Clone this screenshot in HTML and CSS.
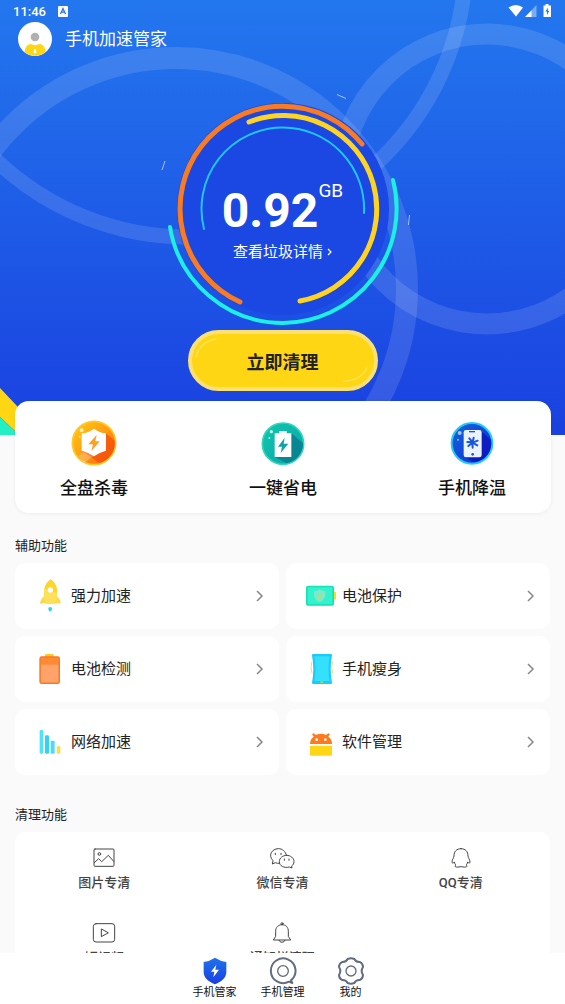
FILE: index.html
```html
<!DOCTYPE html>
<html lang="zh-CN">
<head>
    <meta charset="UTF-8">
    <meta name="viewport" content="width=device-width, initial-scale=1.0">
    <title>手机加速管家</title>
    <link rel="stylesheet" href="styles.css">
</head>
<body>
    <main class="content">
        <div class="hero">
            <svg class="hero-bg" viewBox="0 0 565 435" preserveAspectRatio="xMidYMin slice" aria-hidden="true">
                <g fill="none" stroke="#fff" stroke-opacity="0.12">
                    <circle cx="176" cy="289" r="231" stroke-width="22"/>
                    <circle cx="487" cy="179" r="145" stroke-width="21"/>
                    <circle cx="188" cy="-41" r="278" stroke-width="15"/>
                </g>
                <g stroke="#fff" stroke-opacity="0.6" stroke-width="1">
                    <path d="M165 161l-3 9M337 94.500l9 4M409.500 215l-1 10"/>
                </g>
                <path d="M0 388l18 19v27L0 417z" fill="#ffd614"/>
                <path d="M0 417l18 17v1H0z" fill="#22efc4"/>
            </svg>

            <div class="status-bar">
                <span class="time">11:46</span>
                <svg width="10" height="11" viewBox="0 0 10 11">
                    <rect width="10" height="11" rx="1" fill="#fff"/>
                    <path d="M2.500 8L5 2.500 7.500 8M3.500 6.200h3" fill="none" stroke="#2874ea" stroke-width="1.300"/>
                </svg>
                <svg class="signals" width="44" height="14" viewBox="0 0 44 14">
                    <path d="M0.500 3.500Q8 -1.500 15 3.500L8 12.500z" fill="#fff"/>
                    <path d="M28.500 1v12H17z" fill="#fff" fill-opacity="0.4"/>
                    <path d="M23.500 6.500V13H17z" fill="#fff"/>
                    <path d="M37.500 0h3v1.500H43V13h-7.500V1.500h2z" fill="#fff"/>
                    <path d="M39.800 3.500l-2.300 4h1.500V11l2.300-4.300h-1.500z" fill="#2874ea"/>
                </svg>
            </div>

            <header class="header">
                <svg width="34" height="34" viewBox="0 0 102 102" aria-hidden="true">
                    <clipPath id="avatar-clip"><circle cx="51" cy="51" r="50"/></clipPath>
                    <circle cx="51" cy="51" r="51" fill="#fff"/>
                    <circle cx="51" cy="45" r="13" fill="#b0b0b0"/>
                    <path d="M18 102c0-22 9-36 20-36q13 7 26 0c12 0 21 14 21 36z" fill="#ffd614" clip-path="url(#avatar-clip)"/>
                    <path d="M48 81h6l1 10-4 4-4-4z" fill="#fff"/>
                </svg>
                <h1>手机加速管家</h1>
            </header>

            <div class="gauge">
                <svg class="gauge-rings" viewBox="-118 -118 236 236" aria-hidden="true">
                    <circle r="106" fill="#1b47e2"/>
                    <g fill="none" stroke-linecap="round">
                        <path d="M79 -65A102.500 102.500 0 1 0 -43 93" stroke="#f97b22" stroke-width="5"/>
                        <path d="M-34 -87A93.500 93.500 0 1 1 17 92" stroke="#ffd420" stroke-width="5"/>
                        <path d="M-79 20A81.500 81.500 0 0 1 0 -81.500A81.500 81.500 0 0 1 81 4" stroke="#20c6f2" stroke-width="2"/>
                        <path d="M110 -29A114.500 114.500 0 0 1 0 114A114.500 114.500 0 0 1 -113 18" stroke="#1cf0e2" stroke-width="4"/>
                    </g>
                </svg>
                <div class="gauge-text">
                    <p class="amount">0.92<span class="unit">GB</span></p>
                    <a class="detail" href="#">查看垃圾详情
                        <svg width="5" height="8" viewBox="0 0 5 8"><path d="M1 1l3 3-3 3" fill="none" stroke="#fff" stroke-width="1.200"/></svg>
                    </a>
                </div>
            </div>

            <button class="clean-btn" type="button">
                <svg class="btn-shine" viewBox="4 4 182 53" aria-hidden="true">
                    <path d="M8 27Q12 12 28 9M179 38Q172 51 156 51" fill="none" stroke="#ffe252" stroke-width="1.500" stroke-linecap="round"/>
                </svg>
                <span>立即清理</span>
            </button>
        </div>

        <section class="features">
            <button type="button">
                <svg width="46" height="46" viewBox="0 0 138 138" aria-hidden="true">
                    <defs>
                        <linearGradient id="orange" x1="0" y1="0" x2="1" y2="1">
                            <stop offset="0" stop-color="#ffcf12"/>
                            <stop offset="0.500" stop-color="#ff9d12"/>
                            <stop offset="1" stop-color="#fa5a0c"/>
                        </linearGradient>
                    </defs>
                    <circle cx="69" cy="69" r="65" fill="url(#orange)" stroke="#ffc928" stroke-width="5"/>
                    <path d="M105 40l26 22A62 62 0 0 1 85 129L32 92z" fill="#f64f0a" fill-opacity="0.750"/>
                    <path d="M22 108L52 86l16 22-28 20z" fill="#fff" fill-opacity="0.250"/>
                    <path d="M69 26q16 12 36 14v52q-20 5-36 17-16-12-37-17V40q21-2 37-14z" fill="#fff"/>
                    <path d="M77 45L52 73h14l-5 21 25-30H73z" fill="#ffa021"/>
                    <circle cx="32" cy="31" r="6" fill="#fff" fill-opacity="0.700"/>
                    <circle cx="26" cy="50" r="3" fill="#fff" fill-opacity="0.600"/>
                </svg>
                <span>全盘杀毒</span>
            </button>
            <button type="button">
                <svg width="46" height="46" viewBox="0 0 138 138" aria-hidden="true">
                    <defs>
                        <linearGradient id="teal" x1="0" y1="0" x2="1" y2="1">
                            <stop offset="0" stop-color="#0fc8ae"/>
                            <stop offset="1" stop-color="#0aa3a8"/>
                        </linearGradient>
                    </defs>
                    <circle cx="69" cy="71" r="62" fill="url(#teal)" stroke="#2ed8b8" stroke-width="5"/>
                    <path d="M94 40l35 30A60 60 0 0 1 80 130L44 111z" fill="#087f90" fill-opacity="0.850"/>
                    <path d="M44 40h14v-7h22v7h14v71H44z" fill="#fff"/>
                    <path d="M74 53L54 80h12l-4 19 23-28H71z" fill="#10a3a8"/>
                    <circle cx="34" cy="35" r="5" fill="#fff" fill-opacity="0.800"/>
                    <circle cx="28" cy="54" r="3" fill="#fff" fill-opacity="0.700"/>
                </svg>
                <span>一键省电</span>
            </button>
            <button type="button">
                <svg width="46" height="46" viewBox="0 0 138 138" aria-hidden="true">
                    <defs>
                        <linearGradient id="blue" x1="0" y1="0" x2="1" y2="1">
                            <stop offset="0" stop-color="#1268dc"/>
                            <stop offset="1" stop-color="#1228d0"/>
                        </linearGradient>
                    </defs>
                    <circle cx="69" cy="70" r="61" fill="url(#blue)" stroke="#22c8fa" stroke-width="6"/>
                    <path d="M98 34l28 26A58 58 0 0 1 76 127L46 110z" fill="#0b18bd" fill-opacity="0.800"/>
                    <rect x="44" y="30" width="54" height="82" rx="7" fill="#eaf3ff"/>
                    <path d="M60 35h18" stroke="#2450d8" stroke-width="4"/>
                    <circle cx="71" cy="103" r="4" fill="#2450d8"/>
                    <g stroke="#1b55dd" stroke-width="6" stroke-linecap="round">
                        <path d="M71 66l3-13M71 68l15-6M71 68l14 8M70 69l1 14M70 68l-12 10M70 67l-15-1M70 66l-9-11"/>
                    </g>
                    <circle cx="32" cy="39" r="6" fill="#c9e4ff" fill-opacity="0.800"/>
                    <circle cx="27" cy="59" r="3" fill="#c9e4ff" fill-opacity="0.700"/>
                </svg>
                <span>手机降温</span>
            </button>
        </section>

        <h2>辅助功能</h2>
        <section class="tools">
            <button type="button">
                <svg width="36" height="36" viewBox="0 0 108 108" aria-hidden="true">
                    <path d="M36 55Q24 66 24 77q12-3 21 0h20q10-3 21 0 0-13-12-22z" fill="#ffd94a"/>
                    <path d="M56 4C40 15 34 34 36 56q1 12 9 21h20q9-9 10-21C77 34 71 15 56 4z" fill="#ffe159"/>
                    <path d="M56 4C46 11 39 20 37 33l38 12C77 27 69 13 56 4z" fill="#ffd42b"/>
                    <circle cx="55" cy="36" r="8" fill="#fff"/>
                    <path d="M50 88h9q3 6-1 12h-7q-4-6-1-12z" fill="#35d3e8"/>
                </svg>
                <span>强力加速</span>
                <svg class="arrow" width="8" height="12" viewBox="0 0 8 12"><path d="M1 1l5 5-5 5"/></svg>
            </button>
            <button type="button">
                <svg width="36" height="36" viewBox="0 0 108 108" aria-hidden="true">
                    <rect x="88" y="41" width="11" height="24" rx="2" fill="#f6dc26"/>
                    <rect x="9" y="23" width="84" height="60" rx="6" fill="#14e3b6"/>
                    <rect x="14" y="28" width="74" height="50" rx="2" fill="#35f2cf"/>
                    <path d="M50 34q8 6 17 6c1 18-4 26-17 33-13-7-18-15-17-33q9 0 17-6z" fill="#7be9cd"/>
                    <path d="M42 54l6 7 11-14" fill="none" stroke="#b8dd70" stroke-width="5"/>
                </svg>
                <span>电池保护</span>
                <svg class="arrow" width="8" height="12" viewBox="0 0 8 12"><path d="M1 1l5 5-5 5"/></svg>
            </button>
            <button type="button">
                <svg width="36" height="36" viewBox="0 0 108 108" aria-hidden="true">
                    <rect x="39" y="9" width="26" height="12" rx="4" fill="#ffc91c"/>
                    <rect x="24" y="18" width="58" height="79" rx="5" fill="#ff8a35" stroke="#f47b22" stroke-width="4"/>
                    <rect x="27" y="41" width="52" height="53" fill="#ffa36b"/>
                </svg>
                <span>电池检测</span>
                <svg class="arrow" width="8" height="12" viewBox="0 0 8 12"><path d="M1 1l5 5-5 5"/></svg>
            </button>
            <button type="button">
                <svg width="36" height="36" viewBox="0 0 108 108" aria-hidden="true">
                    <path d="M30 9h54q3 0 3 4-8 41 0 82 0 4-4 4H31q-4 0-4-4 8-41 0-82 0-4 3-4z" fill="#19cbf7"/>
                    <path d="M34 16h46q-7 38 0 74H34q7-36 0-74z" fill="#35e0ff"/>
                    <rect x="52" y="91" width="9" height="5" fill="#8be36c"/>
                    <path d="M27 31q-6 18 0 36M89 31q-6 18 0 36" fill="none" stroke="#ffd27a" stroke-width="3"/>
                </svg>
                <span>手机瘦身</span>
                <svg class="arrow" width="8" height="12" viewBox="0 0 8 12"><path d="M1 1l5 5-5 5"/></svg>
            </button>
            <button type="button">
                <svg width="36" height="36" viewBox="0 0 108 108" aria-hidden="true">
                    <rect x="23" y="18" width="11" height="71" rx="4" fill="#4fe3f7"/>
                    <rect x="39" y="34" width="12" height="55" rx="4" fill="#2fd3f3"/>
                    <rect x="56" y="50" width="12" height="39" rx="4" fill="#4fd9f5"/>
                    <rect x="74" y="66" width="11" height="23" rx="4" fill="#ffdb4d"/>
                </svg>
                <span>网络加速</span>
                <svg class="arrow" width="8" height="12" viewBox="0 0 8 12"><path d="M1 1l5 5-5 5"/></svg>
            </button>
            <button type="button">
                <svg width="36" height="36" viewBox="0 0 108 108" aria-hidden="true">
                    <path d="M21 60q1-16 11-22l-5-8 5-2 7 5q15-8 30 0l7-5 5 2-5 8q10 6 11 22z" fill="#ff7a1c"/>
                    <circle cx="41" cy="47" r="4" fill="#fff"/>
                    <circle cx="67" cy="47" r="4" fill="#fff"/>
                    <path d="M21 65h66v27q0 3-3 3H24q-3 0-3-3z" fill="#ffd614"/>
                </svg>
                <span>软件管理</span>
                <svg class="arrow" width="8" height="12" viewBox="0 0 8 12"><path d="M1 1l5 5-5 5"/></svg>
            </button>
        </section>

        <h2 class="clean-title">清理功能</h2>
        <section class="clean-list">
            <button type="button">
                <svg width="28" height="28" viewBox="0 0 84 84" aria-hidden="true">
                    <rect x="12" y="15" width="60" height="52" rx="3"/>
                    <circle cx="28" cy="30" r="4"/>
                    <path d="M13 56l13-12 9 9 20-19 16 18"/>
                </svg>
                <span>图片专清</span>
            </button>
            <button type="button">
                <svg width="28" height="28" viewBox="0 0 84 84" aria-hidden="true">
                    <path d="M34 58q-6 1-12-2l-9 4 2-10C-1 34 12 14 31 14c12 0 22 8 24 20"/>
                    <path d="M56 34c12 0 22 8 22 19 0 6-3 10-7 13l1 6-8-3c-16 4-30-3-30-16 0-11 10-19 22-19z"/>
                    <path d="M22 28v4M39 28v4M49 45v4M63 45v4"/>
                </svg>
                <span>微信专清</span>
            </button>
            <button type="button">
                <svg width="28" height="28" viewBox="0 0 84 84" aria-hidden="true">
                    <path d="M42 14c14 0 21 9 21 22 0 5 6 11 6 18 0 4-3 4-7 0-1 5-3 7-5 9 4 2 4 6-1 6-7 1-10-1-14-1s-7 2-14 1c-5 0-5-4-1-6-2-2-4-4-5-9-4 4-7 4-7 0 0-7 6-13 6-18 0-13 7-22 21-22z"/>
                </svg>
                <span>QQ专清</span>
            </button>
            <button type="button">
                <svg width="28" height="28" viewBox="0 0 84 84" aria-hidden="true">
                    <rect x="10" y="14" width="64" height="55" rx="8"/>
                    <path d="M34 31v22l20-11z"/>
                </svg>
                <span>短视频</span>
            </button>
            <button type="button">
                <svg width="28" height="28" viewBox="0 0 84 84" aria-hidden="true">
                    <circle cx="42" cy="14" r="3"/>
                    <path d="M42 17c-12 0-19 8-19 20v15L16 63h52l-7-11V37c0-12-7-20-19-20zM33 64q2 6 9 6t9-6"/>
                </svg>
                <span>通知栏清理</span>
            </button>
        </section>
    </main>

    <nav class="tab-bar">
        <a href="#">
            <svg width="28" height="28" viewBox="0 0 84 84" aria-hidden="true">
                <defs>
                    <linearGradient id="shield" x1="0" y1="0" x2="0" y2="1">
                        <stop offset="0" stop-color="#1f74ee"/>
                        <stop offset="1" stop-color="#1a3ee0"/>
                    </linearGradient>
                </defs>
                <path d="M42 2q15 10 34 13v30c0 17-14 29-34 37C22 74 8 62 8 45V15q19-3 34-13z" fill="url(#shield)"/>
                <path d="M46 23L30 44h10l-3 17 17-23H43z" fill="#fff"/>
            </svg>
            <span>手机管家</span>
        </a>
        <a href="#">
            <svg width="28" height="28" viewBox="0 0 84 84" aria-hidden="true">
                <g fill="none" stroke="#626b80">
                    <path d="M66 70A37 37 0 1 0 60 74l10 4z" stroke-width="6" stroke-linejoin="round"/>
                    <circle cx="42" cy="42" r="16" stroke-width="4"/>
                </g>
            </svg>
            <span>手机管理</span>
        </a>
        <a href="#">
            <svg width="28" height="28" viewBox="0 0 84 84" aria-hidden="true">
                <g fill="none" stroke="#626b80">
                    <path d="M32 6q10-4 20 0 5 10 17 9 9 5 9 15-8 12 0 24 0 10-9 15-12-1-17 9-10 4-20 0-5-10-17-9-9-5-9-15 8-12 0-24 0-10 9-15 12 1 17-9z" stroke-width="6" stroke-linejoin="round"/>
                    <circle cx="42" cy="42" r="15" stroke-width="4"/>
                </g>
            </svg>
            <span>我的</span>
        </a>
    </nav>
</body>
</html>
```
FILE: styles.css
```css
* {
    box-sizing: border-box;
}
body {
    margin: 0;
    height: 100vh;
    display: flex;
    flex-direction: column;
    font-family: Roboto, "Noto Sans CJK SC", sans-serif;
    background-color: #fafafa;
    color: #222;
}
button {
    font: inherit;
    color: inherit;
    border: none;
    padding: 0;
    background: none;
    cursor: pointer;
}
a {
    color: inherit;
    text-decoration: none;
}
svg {
    display: block;
    flex-shrink: 0;
}
.content {
    flex: 1;
    min-height: 0;
    overflow-y: auto;
    scrollbar-width: none;
}

/* hero */
.hero {
    position: relative;
    display: flex;
    flex-direction: column;
    align-items: center;
    padding-bottom: 44px;
    background: linear-gradient(#2377ee, #1a40e0);
    color: white;
}
.hero-bg {
    position: absolute;
    top: 0;
    left: 0;
    width: 100%;
    height: 100%;
}
.status-bar, .header, .gauge, .clean-btn {
    position: relative;
}
.status-bar {
    align-self: stretch;
    display: flex;
    align-items: center;
    gap: 12px;
    height: 22px;
    padding: 0 13px;
}
.time {
    font-size: 13px;
    font-weight: 500;
}
.signals {
    margin-left: auto;
}
.header {
    align-self: stretch;
    display: flex;
    align-items: center;
    gap: 13px;
    height: 34px;
    padding: 0 18px;
}
.header h1 {
    margin: 0;
    font-size: 17px;
    font-weight: normal;
    line-height: 24px;
}
.gauge {
    display: grid;
    width: 236px;
    height: 236px;
    margin-top: 35px;
}
.gauge-rings, .gauge-text {
    grid-area: 1 / 1;
}
.gauge-text {
    position: relative;
    display: flex;
    flex-direction: column;
    align-items: center;
    padding-top: 88px;
}
.amount {
    display: flex;
    margin: 0;
    font-size: 48px;
    font-weight: bold;
    line-height: 64px;
}
.unit {
    font-size: 19px;
    font-weight: normal;
    line-height: 24px;
}
.detail {
    display: flex;
    align-items: center;
    gap: 4px;
    font-size: 15px;
    line-height: 18px;
}
.clean-btn {
    width: 190px;
    height: 61px;
    margin-top: 3px;
    border: 4px solid #fce070;
    border-radius: 31px;
    background-color: #ffd614;
    color: #222;
    font-size: 18px;
    font-weight: bold;
}
.btn-shine {
    position: absolute;
    inset: 0;
    width: 100%;
    height: 100%;
}

/* three main features */
.features {
    position: relative;
    display: flex;
    justify-content: space-between;
    margin: -34px 14px 0 15px;
    padding: 19px 45px 13px;
    border-radius: 14px;
    background-color: white;
    box-shadow: 0 1px 4px rgba(0, 0, 0, 0.06);
}
.features button {
    display: flex;
    flex-direction: column;
    align-items: center;
    gap: 10px;
    color: #111;
    font-size: 17px;
    font-weight: 500;
    line-height: 24px;
}

h2 {
    margin: 24px 15px 8px;
    font-size: 13px;
    font-weight: normal;
    line-height: 18px;
}
.clean-title {
    margin-top: 31px;
}

/* tool cards */
.tools {
    display: grid;
    grid-template-columns: 1fr 1fr;
    gap: 7px;
    margin: 0 15px;
}
.tools button {
    display: flex;
    align-items: center;
    gap: 3px;
    height: 66px;
    padding: 0 15px 0 17px;
    border-radius: 10px;
    background-color: white;
    font-size: 15px;
    line-height: 20px;
}
.arrow {
    margin-left: auto;
    fill: none;
    stroke: #888;
    stroke-width: 1.5;
}

/* cleaning grid */
.clean-list {
    display: grid;
    grid-template-columns: repeat(3, 1fr);
    row-gap: 27px;
    margin: 0 15px;
    padding: 12px 0;
    border-radius: 10px;
    background-color: white;
}
.clean-list button {
    display: flex;
    flex-direction: column;
    align-items: center;
    gap: 2px;
    color: #444;
    font-size: 13px;
    font-weight: 500;
    line-height: 18px;
}
.clean-list svg {
    fill: none;
    stroke: #444;
    stroke-width: 3;
    stroke-linecap: round;
    stroke-linejoin: round;
}

/* bottom tabs */
.tab-bar {
    display: flex;
    justify-content: center;
    height: 51px;
    padding-top: 4px;
    background-color: white;
}
.tab-bar a {
    display: flex;
    flex-direction: column;
    align-items: center;
    width: 68px;
    color: #111;
    font-size: 11px;
    line-height: 16px;
}
```
